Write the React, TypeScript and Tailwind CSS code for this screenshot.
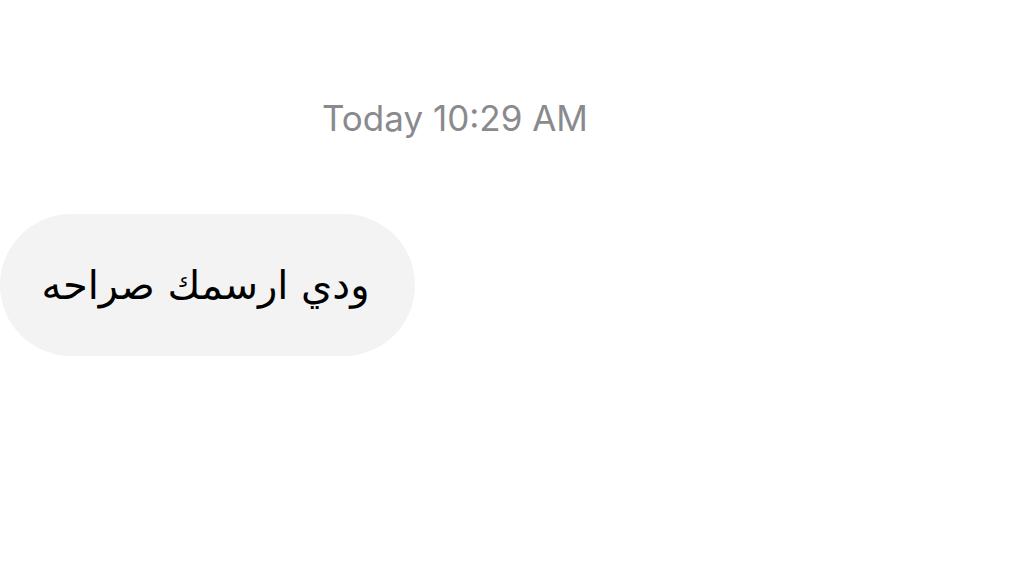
export default function App() {
  return (
    <div className="w-[1023px] h-[565px] bg-white overflow-hidden flex flex-col">
      {/* Timestamp */}
      <div className="pt-[97px] pl-[322px]">
        <span className="text-[35px] leading-[42px] text-[#8a8a8e] font-['Inter','Liberation_Sans',sans-serif]">
          Today 10:29 AM
        </span>
      </div>

      {/* Incoming bubble */}
      <div className="mt-[75px]">
        <div className="w-[415px] h-[142px] rounded-full bg-[#f3f3f3] flex items-center justify-center">
          <span
            dir="rtl"
            className="text-[40px] text-black font-['DejaVu_Sans',sans-serif] pr-[4px]"
          >
            ودي ارسمك صراحه
          </span>
        </div>
      </div>
    </div>
  );
}
